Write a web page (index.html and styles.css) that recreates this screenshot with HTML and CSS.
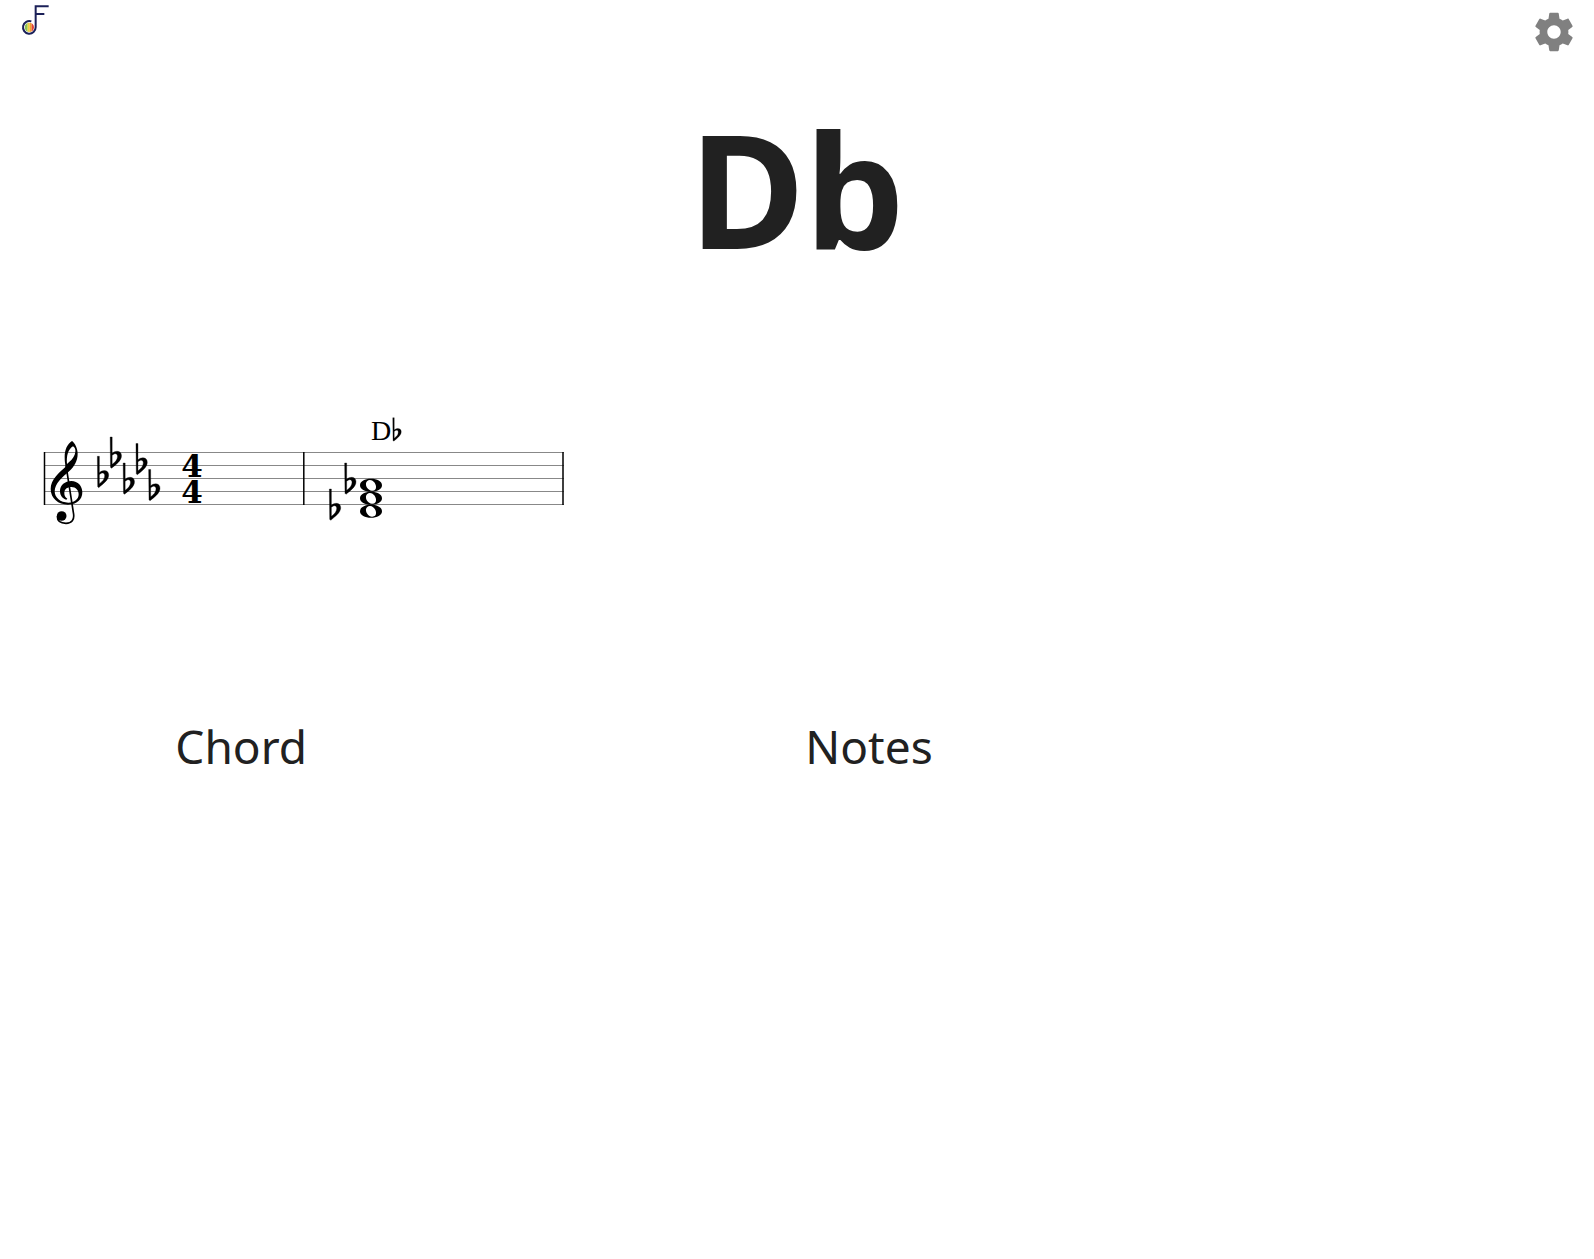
FILE: index.html
```html
<!DOCTYPE html>
<html lang="en">
<head>
<meta charset="utf-8">
<meta name="viewport" content="width=device-width, initial-scale=1">
<title>Db chord</title>
<link rel="stylesheet" href="styles.css">
</head>
<body>
<header class="topbar">
  <a class="logo" href="#" aria-label="Home">
    <svg viewBox="0 0 96 108" width="32" height="36" aria-hidden="true">
      <defs><clipPath id="disc"><circle cx="28" cy="82" r="14"/></clipPath></defs>
      <g clip-path="url(#disc)">
        <path fill="#8cc152" d="M14 66h9v32h-9z"/>
        <path fill="#f2d13c" d="M23 66h6v32h-6z"/>
        <path fill="#f0a030" d="M29 66h6v32h-6z"/>
        <path fill="#e0443a" d="M35 66h8v32h-8z"/>
      </g>
      <path fill="none" stroke="#1b2058" stroke-width="6" d="M86 19H47V82A19 19 0 1 1 34 64M47 42H73"/>
    </svg>
  </a>
  <button class="settings" type="button" aria-label="Settings">
    <svg viewBox="0 0 24 24" width="46" height="46" aria-hidden="true">
      <path fill="currentColor" d="M19.43 12.98c.04-.32.07-.64.07-.98s-.03-.66-.07-.98l2.11-1.65c.19-.15.24-.42.12-.64l-2-3.46c-.12-.22-.39-.3-.61-.22l-2.49 1c-.52-.4-1.08-.73-1.69-.98l-.38-2.65C14.46 2.18 14.25 2 14 2h-4c-.25 0-.46.18-.49.42l-.38 2.65c-.61.25-1.17.59-1.69.98l-2.49-1c-.23-.09-.49 0-.61.22l-2 3.46c-.13.22-.07.49.12.64l2.11 1.65c-.04.32-.07.65-.07.98s.03.66.07.98l-2.11 1.65c-.19.15-.24.42-.12.64l2 3.46c.12.22.39.3.61.22l2.49-1c.52.4 1.08.73 1.69.98l.38 2.65c.03.24.24.42.49.42h4c.25 0 .46-.18.49-.42l.38-2.65c.61-.25 1.17-.59 1.69-.98l2.49 1c.23.09.49 0 .61-.22l2-3.46c.12-.22.07-.49-.12-.64l-2.11-1.65zM12 15.5c-1.93 0-3.5-1.57-3.5-3.5s1.57-3.5 3.5-3.5 3.5 1.57 3.5 3.5-1.57 3.5-3.5 3.5z"/>
    </svg>
  </button>
</header>
<main>
  <h1 class="chord-name">Db</h1>
  <section class="score">
    <svg viewBox="30 410 550 130" width="550" height="130" role="img" aria-label="Db major triad in the key of Db">
      <defs>
        <g id="flat">
          <path stroke="#000" stroke-width="1" d="M-1 0H5L5 49C14 40 33 40 33 56C33 72 15 83 3 94L0 91ZM5 55V82C13 76 21 69 21 58C21 48 12 48 5 55Z" fill-rule="evenodd"/>
        </g>
        <g id="whole">
          <path fill-rule="evenodd" d="M-11 0C-11-4-6-6.500 0-6.500S11-4 11 0S6 6.500 0 6.500S-11 4-11 0ZM-5-2C-5.500 1-3 5.300 1 5.400C4 5.500 5.300 4 5 1C4.600-2.500 2-5.300-1-5.400C-3-5.500-4.700-4-5-2Z"/>
        </g>
      </defs>
      <path class="staff-line" d="M44 452.500H564M44 465.500H564M44 478.500H564M44 491.500H564M44 504.500H564"/>
      <path class="bar-line" d="M44.500 452V505M303.800 452V505M563 452V505"/>
      <g transform="translate(30 420) scale(.3333)">
        <path fill-rule="evenodd" d="M126 63C112 72 104 89 104 111C104 123 105 132 107 140C88 157 62 178 62 207C62 235 85 254 114 254C141 254 157 238 157 217C157 198 144 183 124 183C105 183 90 196 90 213C90 227 98 236 109 239L112 236C105 232 103 226 103 219C103 208 111 201 124 201C138 201 146 211 146 223C146 238 133 248 115 248C91 248 74 233 74 214C74 190 97 171 119 152C132 140 143 123 143 101C143 85 134 68 126 63ZM111 132C109 108 114 88 129 79C137 84 138 94 134 104C130 115 121 123 111 132Z"/>
        <path fill="none" stroke="#000" stroke-width="5" d="M108 136L130 277C135 301 124 310 108 310C93 310 82 303 82 289"/>
        <circle cx="95" cy="288" r="14.500"/>
      </g>
      <use href="#flat" transform="translate(97.700 456.300) scale(.3333)"/>
      <use href="#flat" transform="translate(110.500 437) scale(.3333)"/>
      <use href="#flat" transform="translate(123.500 463) scale(.3333)"/>
      <use href="#flat" transform="translate(136.300 443.500) scale(.3333)"/>
      <use href="#flat" transform="translate(149 469.500) scale(.3333)"/>
      <text class="meter" x="192" y="477">4</text>
      <text class="meter" x="192" y="503">4</text>
      <use href="#flat" transform="translate(345 463) scale(.3333)"/>
      <use href="#flat" transform="translate(329.700 489) scale(.3333)"/>
      <use href="#whole" transform="translate(371 485.300)"/>
      <use href="#whole" transform="translate(371 498.300)"/>
      <use href="#whole" transform="translate(371 511.300)"/>
      <text class="symbol" x="371" y="440">D</text>
      <use href="#flat" transform="translate(393 417.700) scale(.25)"/>
    </svg>
  </section>
  <section class="labels">
    <h2 class="label">Chord</h2>
    <h2 class="label">Notes</h2>
  </section>
</main>
</body>
</html>
```
FILE: styles.css
```css
* { box-sizing: border-box; }

body {
  margin: 0;
  background: #fff;
  color: #212121;
  font-family: "Segoe UI", "Noto Sans", sans-serif;
}

.topbar {
  display: flex;
  justify-content: space-between;
  align-items: flex-start;
  height: 64px;
  padding: 0 17px 0 20px;
}

.logo { display: block; }

.settings {
  margin: 9px 0 0;
  padding: 0;
  border: 0;
  background: none;
  color: #808080;
  cursor: pointer;
}

.logo svg,
.settings svg,
.score svg { display: block; }

.chord-name {
  margin: 18px 0 0;
  font-size: 158px;
  line-height: 212px;
  font-weight: 700;
  text-align: center;
}

.score { padding: 116px 0 0 30px; }

.bar-line {
  fill: none;
  stroke: #000;
  stroke-width: 1.5px;
}

.staff-line {
  fill: none;
  stroke: #888;
  stroke-width: 1.2px;
}

.meter {
  font: 700 31px "DejaVu Serif", serif;
  text-anchor: middle;
}

.symbol { font: 28px "Liberation Serif", serif; }

.labels {
  display: grid;
  grid-template-columns: 630px 1fr;
  padding: 174px 0 0 11%;
}

.label {
  margin: 0;
  font-size: 46px;
  line-height: 64px;
  font-weight: 400;
}
```
